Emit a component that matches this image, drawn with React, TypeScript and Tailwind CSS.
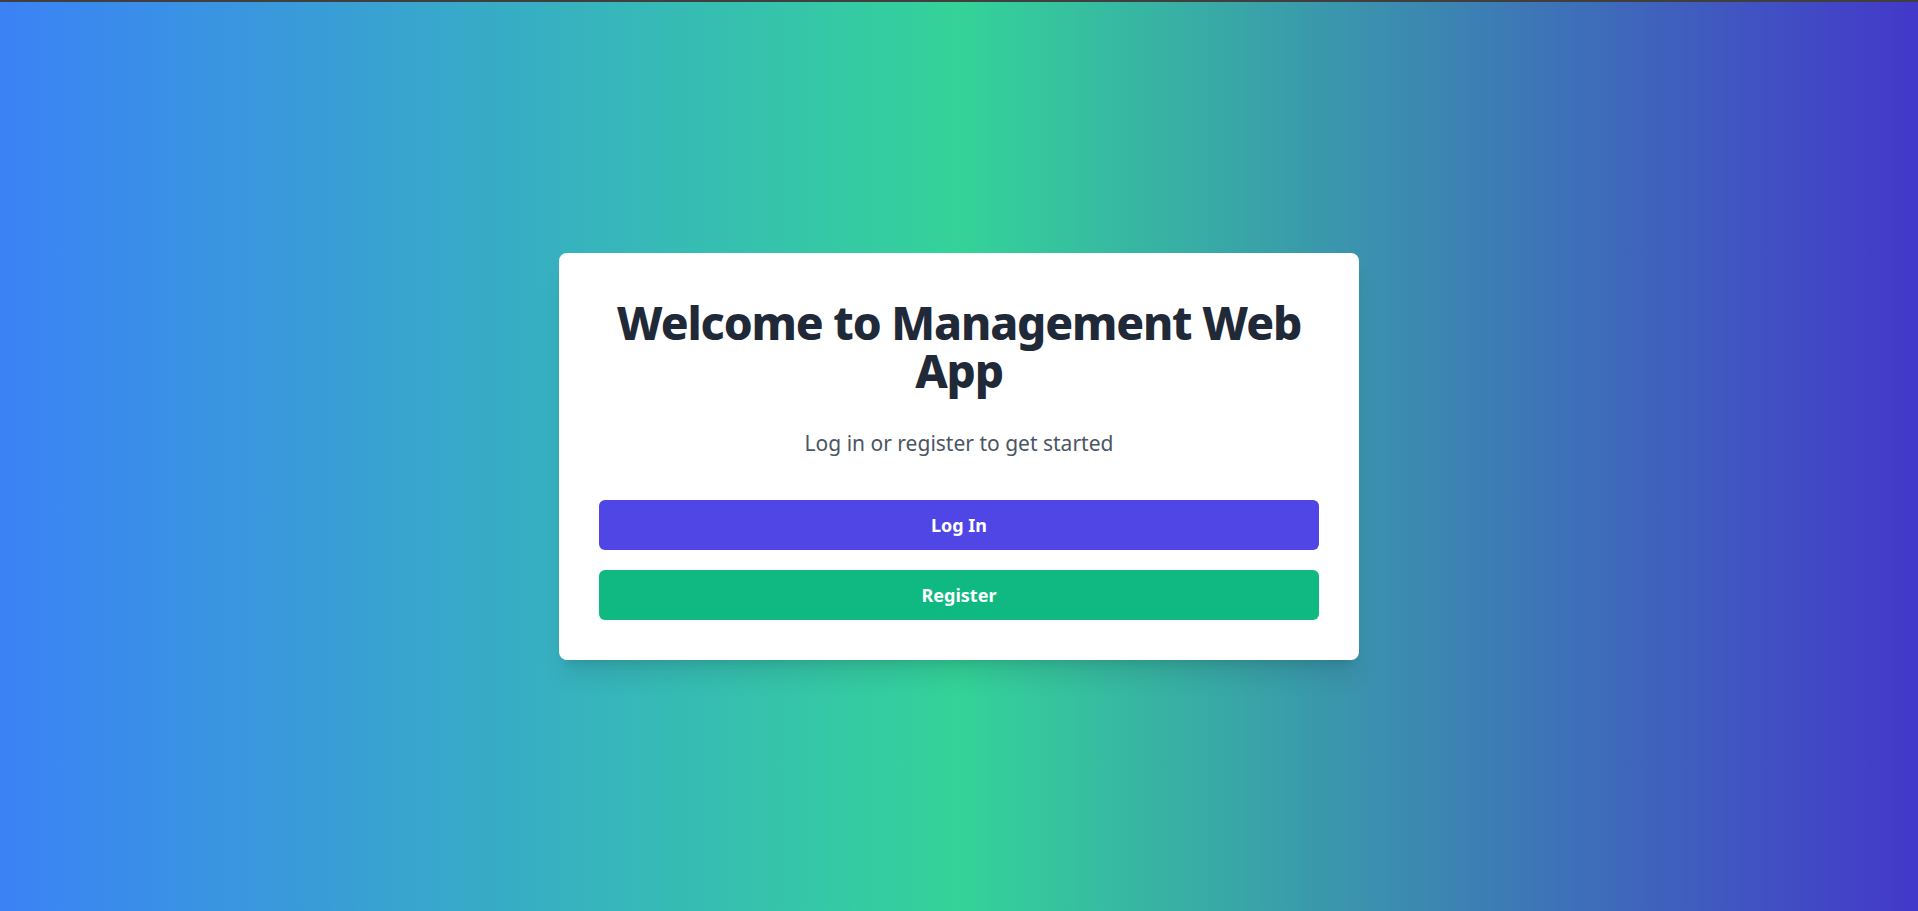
export default function App() {
  return (
    <div
      className="flex min-h-screen flex-col bg-[linear-gradient(to_right,#3b82f6,#34d399,#4338ca)]"
      style={{ fontFamily: '"Noto Sans", "Open Sans", sans-serif' }}
    >
      <div className="h-[2px] w-full bg-[#3f3f3f]" />
      <main className="flex flex-1 items-center justify-center">
        <div className="w-[800px] rounded-lg bg-white p-10 text-center shadow-xl">
          <h1 className="pt-[5px] text-[46px] leading-[48px] font-extrabold tracking-tight text-[#1f2937]">
            Welcome to Management Web App
          </h1>
          <p className="mt-[35px] text-[21px] leading-7 text-[#4b5563]">
            Log in or register to get started
          </p>
          <div className="mt-[43px] flex flex-col gap-5">
            <button className="h-[50px] w-full rounded-md bg-[#4f46e5] text-lg font-bold text-white">
              Log In
            </button>
            <button className="h-[50px] w-full rounded-md bg-[#10b981] text-lg font-bold text-white">
              Register
            </button>
          </div>
        </div>
      </main>
    </div>
  );
}
